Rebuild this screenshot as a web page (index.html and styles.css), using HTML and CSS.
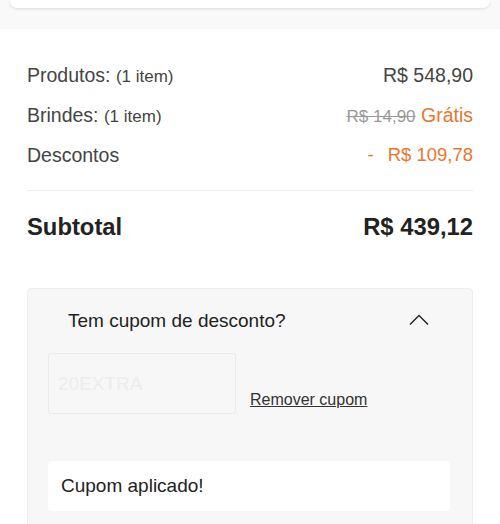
FILE: index.html
```html
<!DOCTYPE html>
<html lang="pt-BR">
<head>
    <meta charset="UTF-8">
    <meta name="viewport" content="width=device-width, initial-scale=1.0">
    <title>Resumo do pedido</title>
    <link rel="stylesheet" href="styles.css">
</head>
<body>

    <div class="topo">
        <div class="topo-card"></div>
    </div>

    <div class="resumo">
        <div class="linha">
            <span class="rotulo">Produtos: <small>(1 item)</small></span>
            <span class="valor">R$ 548,90</span>
        </div>
        <div class="linha">
            <span class="rotulo">Brindes: <small>(1 item)</small></span>
            <span class="valor"><s class="riscado">R$ 14,90</s> <span class="laranja">Grátis</span></span>
        </div>
        <div class="linha">
            <span class="rotulo">Descontos</span>
            <span class="valor laranja desconto"><span class="traco">-</span>R$ 109,78</span>
        </div>

        <div class="subtotal">
            <span>Subtotal</span>
            <span>R$ 439,12</span>
        </div>

        <div class="cupom">
            <div class="cupom-topo">
                <span>Tem cupom de desconto?</span>
                <svg class="seta" width="20" height="12" viewBox="0 0 20 12">
                    <polyline points="1,10.5 10,1.5 19,10.5" fill="none" stroke="#222" stroke-width="1.4"/>
                </svg>
            </div>
            <div class="cupom-form">
                <input type="text" class="cupom-input" placeholder="20EXTRA" disabled>
                <a href="#" class="remover">Remover cupom</a>
            </div>
            <div class="cupom-msg">Cupom aplicado!</div>
        </div>
    </div>

</body>
</html>
```

FILE: styles.css
```css
body {
    font-family: "Liberation Sans", Arial, sans-serif;
    margin: 0;
    background: #fff;
    color: #444;
}
.topo {
    background-color: #f9f9f9;
    height: 29px;
    padding: 0 10px;
}
.topo-card {
    height: 8px;
    background: #fff;
    border-radius: 0 0 7px 7px;
    box-shadow: 0 1px 3px rgba(0, 0, 0, 0.12);
}
.resumo {
    padding: 26px 27px 0;
}
.linha {
    display: flex;
    justify-content: space-between;
    align-items: center;
    height: 40px;
    font-size: 19.5px;
}
.linha small {
    font-size: 17px;
}
.riscado {
    color: #999;
    font-size: 17px;
}
.laranja {
    color: #e8762d;
}
.desconto {
    font-size: 18.5px;
}
.traco {
    margin-right: 14px;
}
.subtotal {
    display: flex;
    justify-content: space-between;
    align-items: center;
    border-top: 1px solid #eee;
    margin-top: 15px;
    padding-top: 21px;
    height: 30px;
    font-size: 23.8px;
    font-weight: bold;
    color: #222;
}
.cupom {
    margin-top: 46px;
    background-color: #f7f7f7;
    border: 1px solid #eee;
    border-radius: 4px;
    padding: 0 20px 20px;
}
.cupom-topo {
    display: flex;
    justify-content: space-between;
    align-items: center;
    height: 64px;
    padding: 0 23px 0 20px;
    font-size: 19px;
    color: #222;
}
.seta {
    margin-top: -2px;
}
.cupom-form {
    display: flex;
    align-items: flex-end;
    gap: 14px;
}
.cupom-input {
    width: 188px;
    height: 61px;
    box-sizing: border-box;
    padding: 0 9px;
    border: 1px solid #ebebeb;
    border-radius: 3px;
    background-color: #f7f7f7;
    font-family: inherit;
    font-size: 19px;
}
.cupom-input::placeholder {
    color: #ececec;
}
.remover {
    color: #333;
    font-size: 16px;
    text-decoration: underline;
    margin-bottom: 5px;
}
.cupom-msg {
    margin-top: 47px;
    margin-right: 2px;
    background: #fff;
    border-radius: 4px;
    height: 50px;
    line-height: 50px;
    padding: 0 13px;
    font-size: 19px;
    color: #222;
}
```
